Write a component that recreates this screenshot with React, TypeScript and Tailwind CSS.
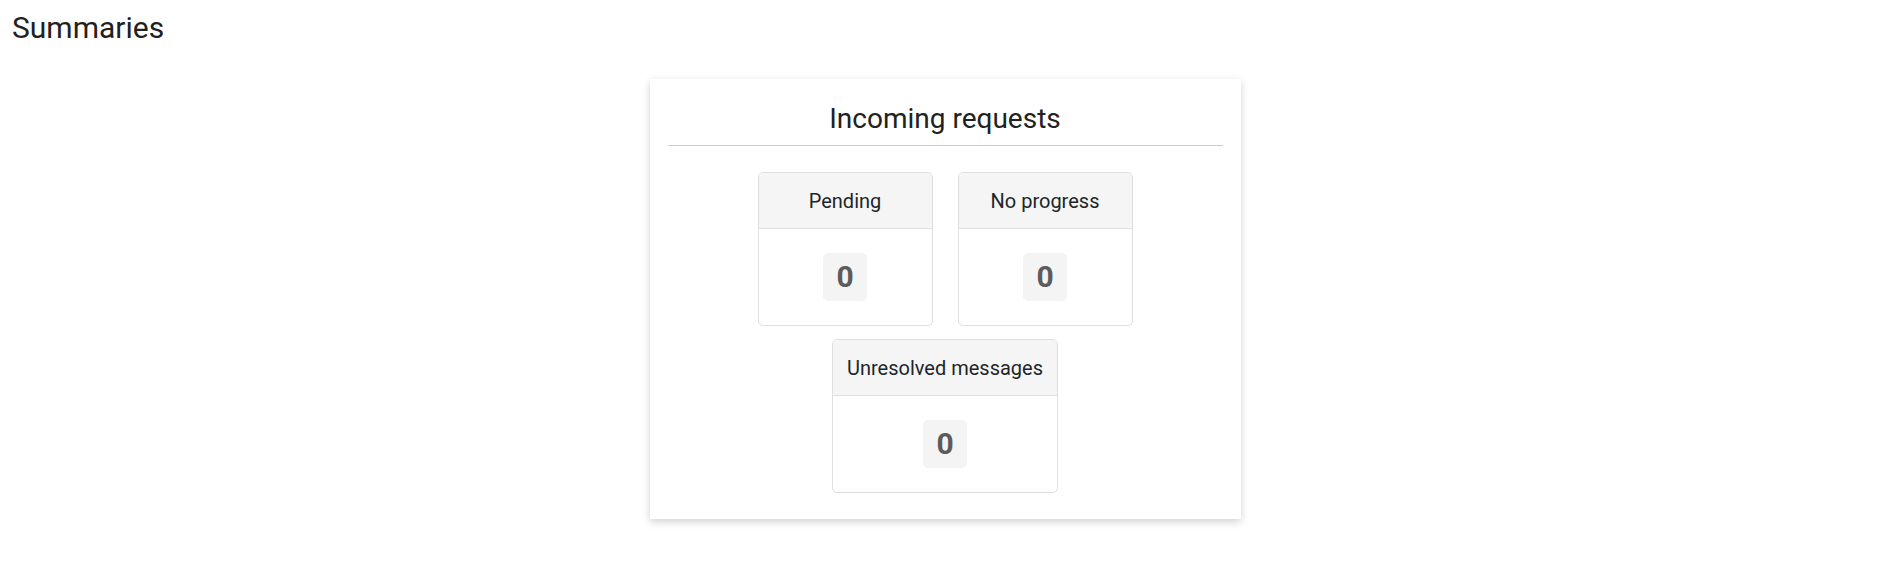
const counters = [
  { label: "Pending", value: 0 },
  { label: "No progress", value: 0 },
  { label: "Unresolved messages", value: 0 },
]

function Counter({ label, value }: { label: string; value: number }) {
  return (
    <div className="min-w-[175px] rounded-[5px] border border-[#dfdfdf] overflow-hidden bg-white">
      <div className="bg-[#f5f5f5] border-b border-[#dfdfdf] px-[14px] py-[12.5px] text-center text-[20px] leading-[30px] text-[#212529]">
        {label}
      </div>
      <div className="flex justify-center py-[24px]">
        <span className="rounded-[5px] bg-[#f4f4f4] px-[13px] py-[6px] text-[30px] leading-[36px] font-bold text-[#5c5c5c]">
          {value}
        </span>
      </div>
    </div>
  )
}

export default function App() {
  return (
    <div className="min-h-screen bg-white font-['Roboto',sans-serif] text-[#212121]">
      <h1 className="px-3 pt-[10px] text-[30px] leading-[36px] font-normal">
        Summaries
      </h1>

      <div className="flex justify-center mt-[33px] pr-[1px]">
        <div className="w-[591px] bg-white px-[18px] pt-[23px] pb-[26px] shadow-[0_3px_8px_rgba(0,0,0,0.18)]">
          <h2 className="border-b border-[#cccccc] pb-[9px] text-center text-[28px] leading-[34px] font-normal">
            Incoming requests
          </h2>

          <div className="mt-[26px] flex flex-wrap justify-center gap-x-[25px] gap-y-[13px]">
            {counters.map((c) => (
              <Counter key={c.label} label={c.label} value={c.value} />
            ))}
          </div>
        </div>
      </div>
    </div>
  )
}
